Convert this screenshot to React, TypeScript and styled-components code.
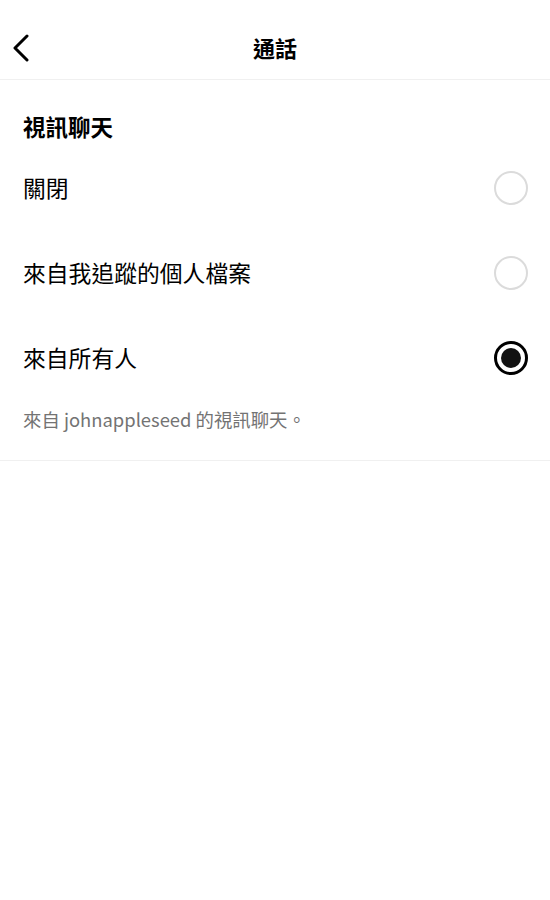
import React, { useState } from 'react'
import styled, { createGlobalStyle } from 'styled-components'

const GlobalStyle = createGlobalStyle`
  * { box-sizing: border-box; }
  body {
    margin: 0;
    background: #fff;
    font-family: "Noto Sans CJK TC", "Noto Sans", sans-serif;
    color: #000;
  }
`

const Page = styled.div`
  width: 550px;
  min-height: 900px;
  background: #fff;
`

const Header = styled.header`
  height: 80px;
  padding-top: 16px;
  display: grid;
  grid-template-columns: 60px 1fr 60px;
  align-items: center;
  border-bottom: 1px solid #f0f0f0;
`

const BackButton = styled.button`
  border: none;
  background: none;
  padding: 0 0 0 10px;
  height: 40px;
  display: flex;
  align-items: center;
  cursor: pointer;
`

const Title = styled.h1`
  margin: 0;
  text-align: center;
  font-size: 22px;
  font-weight: 700;
  line-height: 1;
  padding-bottom: 2px;
`

const Section = styled.section`
  padding: 30px 0 0;
  border-bottom: 1px solid #f0f0f0;
`

const SectionTitle = styled.h2`
  margin: 0;
  padding: 0 23px;
  font-size: 22.5px;
  font-weight: 700;
  line-height: 32px;
`

const List = styled.div`
  margin-top: 3px;
`

const Row = styled.label`
  height: 85px;
  display: flex;
  align-items: center;
  justify-content: space-between;
  padding: 0 22px 0 23px;
  font-size: 22.8px;
  cursor: pointer;
`

const Radio = styled.span<{ checked: boolean }>`
  width: 34px;
  height: 34px;
  border-radius: 50%;
  border: ${({ checked }) => (checked ? '3px solid #000' : '2px solid #dbdbdb')};
  display: flex;
  align-items: center;
  justify-content: center;

  &::after {
    content: '';
    display: ${({ checked }) => (checked ? 'block' : 'none')};
    width: 20px;
    height: 20px;
    border-radius: 50%;
    background: #121212;
  }
`

const Note = styled.p`
  margin: 4px 0 0;
  padding: 0 23px 26px;
  font-size: 18.4px;
  color: #737373;
  line-height: 30px;
`

const options = ['關閉', '來自我追蹤的個人檔案', '來自所有人']

const App: React.FC = () => {
  const [selected, setSelected] = useState(2)

  return (
    <>
      <GlobalStyle />
      <Page>
        <Header>
          <BackButton aria-label='返回'>
            <svg width='24' height='28' viewBox='0 0 24 28' fill='none'>
              <path d='M17 2 L5 14 L17 26' stroke='#000' strokeWidth='3' strokeLinecap='round' strokeLinejoin='round' />
            </svg>
          </BackButton>
          <Title>通話</Title>
          <div />
        </Header>
        <Section>
          <SectionTitle>視訊聊天</SectionTitle>
          <List>
            {options.map((o, i) => (
              <Row key={o} onClick={() => setSelected(i)}>
                {o}
                <Radio checked={selected === i} />
              </Row>
            ))}
          </List>
          <Note>來自 johnappleseed 的視訊聊天。</Note>
        </Section>
      </Page>
    </>
  )
}

export default App
